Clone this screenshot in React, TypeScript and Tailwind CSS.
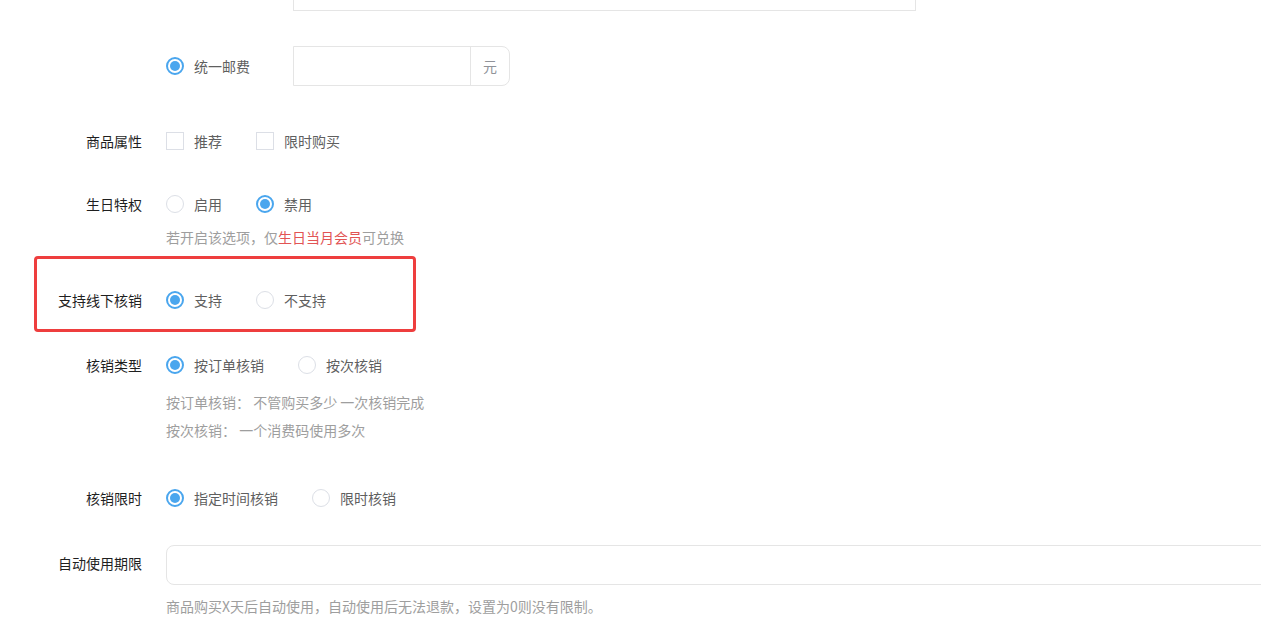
import React from "react";

const FONT = { fontFamily: '"Microsoft YaHei", "Noto Sans CJK SC", "Noto Sans", sans-serif' };

function Radio({ checked, label, last }: { checked?: boolean; label: string; last?: boolean }) {
  return (
    <div className={`flex items-center ${last ? "" : "mr-[34px]"}`}>
      {checked ? (
        <span className="flex h-[18px] w-[18px] items-center justify-center rounded-full border-2 border-[#4aa6ee] bg-white">
          <span className="h-[10px] w-[10px] rounded-full bg-[#4aa6ee]" />
        </span>
      ) : (
        <span className="h-[18px] w-[18px] rounded-full border border-[#dcdfe6] bg-white" />
      )}
      <span className="ml-[10px] text-[14px] text-[#5f5f5f]">{label}</span>
    </div>
  );
}

function Checkbox({ label }: { label: string }) {
  return (
    <div className="mr-[34px] flex items-center">
      <span className="h-[18px] w-[18px] border border-[#dcdfe6] bg-white" />
      <span className="ml-[10px] text-[14px] text-[#5f5f5f]">{label}</span>
    </div>
  );
}

function Row({
  label,
  className,
  labelClass,
  children,
}: {
  label?: string;
  className?: string;
  labelClass?: string;
  children: React.ReactNode;
}) {
  return (
    <div className={`flex h-10 items-center ${className ?? ""}`}>
      <div className={`w-[142px] shrink-0 text-right text-[14px] text-[#1f1f1f] ${labelClass ?? ""}`}>{label}</div>
      <div className="ml-6 flex items-center">{children}</div>
    </div>
  );
}

function Help({ className, children }: { className?: string; children: React.ReactNode }) {
  return <div className={`ml-[166px] h-5 text-[14px] leading-5 text-[#9e9e9e] ${className ?? ""}`}>{children}</div>;
}

export default function App() {
  return (
    <div className="relative h-[631px] w-[1261px] overflow-hidden bg-white" style={FONT}>
      {/* tail of the input above */}
      <div className="ml-[293px] h-[11px] w-[623px] border-x border-b border-[#e5e5e5]" />

      <Row className="mt-[35px]">
        <Radio checked label="统一邮费" />
        <div className="ml-[9px] flex h-10 w-[217px] rounded-r-lg border border-[#e5e5e5]">
          <div className="flex-1" />
          <div className="flex w-[39px] items-center justify-center border-l border-[#e5e5e5] text-[14px] text-[#909399]">
            元
          </div>
        </div>
      </Row>

      <Row label="商品属性" className="mt-[35px]">
        <Checkbox label="推荐" />
        <Checkbox label="限时购买" />
      </Row>

      <Row label="生日特权" className="mt-[23px]">
        <Radio label="启用" />
        <Radio checked label="禁用" />
      </Row>
      <Help className="mt-[3px]">
        若开启该选项，仅<span className="text-[#e25454]">生日当月会员</span>可兑换
      </Help>

      <Row label="支持线下核销" className="mt-[33px]">
        <Radio checked label="支持" />
        <Radio label="不支持" />
      </Row>

      <Row label="核销类型" className="mt-[25px]">
        <Radio checked label="按订单核销" />
        <Radio label="按次核销" />
      </Row>
      <Help className="mt-[7px]">按订单核销： 不管购买多少 一次核销完成</Help>
      <Help className="mt-[8px]">按次核销： 一个消费码使用多次</Help>

      <Row label="核销限时" className="mt-[38px]">
        <Radio checked label="指定时间核销" />
        <Radio label="限时核销" />
      </Row>

      <Row label="自动使用期限" labelClass="-mt-[4px]" className="mt-[27px]">
        <div className="h-10 w-[1120px] rounded-l-lg border border-[#e5e5e5] bg-white" />
      </Row>
      <Help className="mt-[11px]">商品购买X天后自动使用，自动使用后无法退款，设置为0则没有限制。</Help>

      {/* annotation box */}
      <div className="pointer-events-none absolute left-[34px] top-[256px] h-[76px] w-[382px] rounded-[4px] border-[3px] border-[#ee3e3e]" />
    </div>
  );
}
